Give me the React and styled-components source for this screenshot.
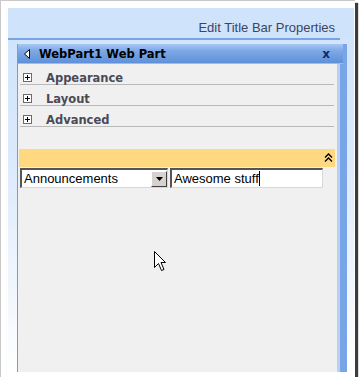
import styled, { createGlobalStyle } from 'styled-components';

const Global = createGlobalStyle`
  html, body { margin: 0; padding: 0; background: #fff; }
  body { font-family: "DejaVu Sans", Verdana, sans-serif; }
`;

const Frame = styled.div`
  width: 355px;
  height: 377px;
  box-sizing: border-box;
  padding: 7px 1px 1px 7px;
  border-left: 1px solid #c9c9c9;
  border-top: 1px solid #c9c9c9;
  background: #fff;
  box-shadow: 3px 3px 1px #3c3c3c;
`;

const Page = styled.div`
  height: 100%;
  display: flex;
  flex-direction: column;
  background: linear-gradient(180deg, #cfe3fb 0%, #dbe9fb 40%, #ffffff 100%);
`;

const TopBar = styled.div`
  height: 30px;
  display: flex;
  align-items: flex-end;
  justify-content: flex-end;
  padding: 0 19px 3px 0;
  box-sizing: border-box;
  background: #cfe3fb;
  font-family: "Liberation Sans", Arial, sans-serif;
  font-size: 13px;
  color: #3a4565;
`;

const Rule = styled.div`
  height: 2px;
  margin-right: 14px;
  background: #79a4e2;
`;

const Body = styled.div`
  flex: 1;
  display: flex;
  padding: 4px 0 4px 9px;
`;

const Panel = styled.div`
  width: 330px;
  display: flex;
  flex-direction: column;
  border-left: 1px solid #6f9de0;
  border-right: 7px solid #78a5e8;
  background: #f0f0f0;
  box-sizing: border-box;
`;

const TitleBar = styled.div`
  height: 20px;
  margin-right: -3px;
  display: flex;
  align-items: center;
  padding: 0 6px;
  box-sizing: border-box;
  background: linear-gradient(180deg, #a9c8f3 0%, #7ea8e6 35%, #5f90d8 100%);
  border-bottom: 1px solid #9fbdea;
`;

const Title = styled.span`
  flex: 1;
  margin-left: 9px;
  font-size: 11.5px;
  font-weight: bold;
  color: #000;
`;

const Close = styled.span`
  font-size: 12px;
  font-weight: bold;
  color: #0d2a6e;
  margin-right: 7px;
`;

const Content = styled.div`
  flex: 1;
  border-right: 3px solid #b7d0f4;
  position: relative;
`;

const Section = styled.div`
  height: 21px;
  margin: 0 3px 0 2px;
  padding-top: 7px;
  box-sizing: border-box;
  display: flex;
  align-items: center;
  border-bottom: 1px solid #b9b9b9;
  font-size: 11.5px;
  font-weight: bold;
  color: #4a4a55;
`;

const Plus = styled.span`
  width: 9px;
  height: 9px;
  margin: 0 14px 0 3px;
  box-sizing: border-box;
  border: 1px solid #6b6b6b;
  background: #fff;
  position: relative;
  &::before { content: ""; position: absolute; left: 1px; top: 3px; width: 5px; height: 1px; background: #000; }
  &::after { content: ""; position: absolute; left: 3px; top: 1px; width: 1px; height: 5px; background: #000; }
`;

const Highlight = styled.div`
  height: 18px;
  margin: 22px 2px 0 1px;
  display: flex;
  align-items: center;
  justify-content: flex-end;
  padding-right: 2px;
  background: #fed97f;
`;

const Controls = styled.div`
  display: flex;
  gap: 2px;
  margin: 1px 0 0 2px;
  font-family: "Liberation Sans", Arial, sans-serif;
  font-size: 13px;
  color: #000;
`;

const Field = styled.div`
  width: ${(p) => p.$w}px;
  height: 20px;
  box-sizing: border-box;
  display: flex;
  align-items: center;
  padding-left: ${(p) => p.$pad}px;
  background: #fff;
  border-top: 2px solid #555;
  border-left: 2px solid #555;
  border-bottom: 1px solid #d8d8d8;
  border-right: 1px solid #d8d8d8;
`;

const SelectText = styled.span`
  flex: 1;
  padding-left: 2px;
`;

const DropButton = styled.span`
  width: 16px;
  height: 16px;
  box-sizing: border-box;
  display: flex;
  align-items: center;
  justify-content: center;
  background: #d6d3ce;
  border-top: 1px solid #fff;
  border-left: 1px solid #fff;
  border-right: 1px solid #404040;
  border-bottom: 1px solid #404040;
`;

const Caret = styled.span`
  width: 1px;
  height: 15px;
  background: #000;
`;

const Pointer = styled.svg`
  position: absolute;
  left: 136px;
  top: 187px;
`;

const sections = ['Appearance', 'Layout', 'Advanced'];

export default function App() {
  return (
    <>
      <Global />
      <Frame>
        <Page>
          <TopBar>Edit Title Bar Properties</TopBar>
          <Rule />
          <Body>
            <Panel>
              <TitleBar>
                <svg width="6" height="10" viewBox="0 0 6 10">
                  <path d="M5.5 0.5 L0.5 5 L5.5 9.5 Z" fill="#fff" stroke="#000" strokeWidth="1" />
                </svg>
                <Title>WebPart1 Web Part</Title>
                <Close>x</Close>
              </TitleBar>
              <Content>
                {sections.map((s) => (
                  <Section key={s}>
                    <Plus />
                    {s}
                  </Section>
                ))}
                <Highlight>
                  <svg width="9" height="10" viewBox="0 0 9 10">
                    <path d="M1 4.5 L4.5 1 L8 4.5 M1 8.5 L4.5 5 L8 8.5" fill="none" stroke="#000" strokeWidth="1.3" />
                  </svg>
                </Highlight>
                <Controls>
                  <Field $w={148} $pad={0}>
                    <SelectText>Announcements</SelectText>
                    <DropButton>
                      <svg width="7" height="4" viewBox="0 0 7 4">
                        <path d="M0 0 L7 0 L3.5 4 Z" fill="#000" />
                      </svg>
                    </DropButton>
                  </Field>
                  <Field $w={153} $pad={2}>
                    Awesome stuff
                    <Caret />
                  </Field>
                </Controls>
                <Pointer width="12" height="21" viewBox="0 0 12 21">
                  <path d="M0.5 0.5 L0.5 16.5 L4.5 12.5 L7.5 19.5 L10 18.5 L7 11.5 L11.5 11.5 Z" fill="#fff" stroke="#000" strokeWidth="1" />
                </Pointer>
              </Content>
            </Panel>
          </Body>
        </Page>
      </Frame>
    </>
  );
}
